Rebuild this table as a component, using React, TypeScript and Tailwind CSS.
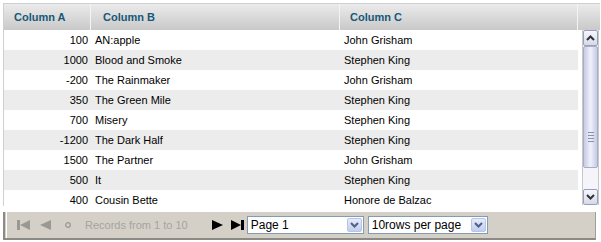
import React from "react";

const rows: [string, string, string][] = [
  ["100", "AN:apple", "John Grisham"],
  ["1000", "Blood and Smoke", "Stephen King"],
  ["-200", "The Rainmaker", "John Grisham"],
  ["350", "The Green Mile", "Stephen King"],
  ["700", "Misery", "Stephen King"],
  ["-1200", "The Dark Half", "Stephen King"],
  ["1500", "The Partner", "John Grisham"],
  ["500", "It", "Stephen King"],
  ["400", "Cousin Bette", "Honore de Balzac"],
];

function ChevronUp() {
  return (
    <svg width="9" height="6" viewBox="0 0 9 6">
      <path d="M1 5 L4.5 1.5 L8 5" stroke="#333" strokeWidth="2" fill="none" />
    </svg>
  );
}
function ChevronDown({ color = "#333" }: { color?: string }) {
  return (
    <svg width="9" height="6" viewBox="0 0 9 6">
      <path d="M1 1 L4.5 4.5 L8 1" stroke={color} strokeWidth="2" fill="none" />
    </svg>
  );
}

function Select({ label, width }: { label: string; width: number }) {
  return (
    <div
      className="flex h-[18px] items-center border border-[#7f9db9] bg-white"
      style={{ width }}
    >
      <span className="flex-1 whitespace-nowrap pl-[3px] text-[12px] leading-[16px] text-black">{label}</span>
      <div className="mr-[1px] flex h-[14px] w-[15px] shrink-0 items-center justify-center rounded-[2px] border border-[#b8c4e4] bg-gradient-to-b from-[#e6ebf8] to-[#c3cdee]">
        <ChevronDown color="#4d6185" />
      </div>
    </div>
  );
}

export default function App() {
  return (
    <div
      className="h-[242px] w-[601px] bg-white pl-[3px] pt-[3px]"
      style={{ fontFamily: '"Liberation Sans", Arial, sans-serif' }}
    >
      <div className="w-[597px] border-l border-t border-[#d0d0d0]">
        {/* header */}
        <div className="flex h-[26px] bg-gradient-to-b from-[#ebebeb] to-[#c9c9c9] text-[11px] font-bold text-[#17587a]">
          <div className="flex w-[87px] items-center border-r border-[#f4f4f4] pl-[10px]">Column A</div>
          <div className="flex w-[249px] items-center border-r border-[#f4f4f4] pl-[12px]">Column B</div>
          <div className="flex w-[238px] items-center border-r border-[#f4f4f4] pl-[10px]">Column C</div>
          <div className="flex-1" />
        </div>
        {/* body */}
        <div className="flex h-[176px] overflow-hidden">
          <div className="w-[574px] text-[11px] text-black">
            {rows.map((r, i) => (
              <div
                key={i}
                className={
                  "flex h-[20px] items-center " + (i % 2 === 1 ? "bg-[#ececec]" : "bg-white")
                }
              >
                <div className="w-[87px] pr-[3px] text-right">{r[0]}</div>
                <div className="w-[249px] pl-[4px]">{r[1]}</div>
                <div className="w-[238px] pl-[4px]">{r[2]}</div>
              </div>
            ))}
          </div>
          <div className="ml-[4px] flex h-[175px] w-[17px] flex-col border-l border-r border-[#c8c8c8] bg-[#f4f4fa]">
            <div className="flex h-[16px] items-center justify-center rounded-[2px] border border-[#98a0b8] bg-gradient-to-b from-[#f5f6ff] to-[#d6dae8]">
              <ChevronUp />
            </div>
            <div className="flex h-[122px] flex-col items-center justify-center rounded-[2px] border border-[#a8acc4] bg-gradient-to-r from-[#c8cbe2] via-[#eef0fb] to-[#c8cbe2]">
              <div className="mt-[60px] flex flex-col gap-[2px]">
                <div className="h-px w-[6px] bg-[#8a8fb0]" />
                <div className="h-px w-[6px] bg-[#8a8fb0]" />
                <div className="h-px w-[6px] bg-[#8a8fb0]" />
                <div className="h-px w-[6px] bg-[#8a8fb0]" />
              </div>
            </div>
            <div className="flex-1" />
            <div className="flex h-[16px] items-center justify-center rounded-[2px] border border-[#98a0b8] bg-gradient-to-b from-[#f5f6ff] to-[#d6dae8]">
              <ChevronDown />
            </div>
          </div>
        </div>
      </div>
      {/* pager */}
      <div className="mt-[6px] flex h-[28px] w-[593px] items-center border-b-2 border-l-2 border-r border-b-[#8c8a85] border-l-[#8c8a85] border-r-[#a09e98] bg-[#d4d0c8] text-[11px]">
        <div className="ml-[1px] h-full w-px bg-white" />
        <svg className="ml-[10px]" width="13" height="10" viewBox="0 0 13 10">
          <rect x="0" y="0" width="3" height="10" fill="#9a9892" />
          <path d="M13 0 L3 5 L13 10 Z" fill="#9a9892" />
        </svg>
        <svg className="ml-[10px]" width="11" height="10" viewBox="0 0 11 10">
          <path d="M11 0 L0 5 L11 10 Z" fill="#9a9892" />
        </svg>
        <svg className="ml-[14px]" width="6" height="6" viewBox="0 0 6 6">
          <circle cx="3" cy="3" r="2.3" stroke="#9a9892" strokeWidth="1.3" fill="none" />
        </svg>
        <span className="ml-[14px] whitespace-nowrap text-[11px] text-[#a6a49f]">Records from 1 to 10</span>
        <svg className="ml-[24px]" width="11" height="10" viewBox="0 0 11 10">
          <path d="M0 0 L11 5 L0 10 Z" fill="#000" />
        </svg>
        <svg className="ml-[8px]" width="13" height="10" viewBox="0 0 13 10">
          <path d="M0 0 L10 5 L0 10 Z" fill="#000" />
          <rect x="10" y="0" width="3" height="10" fill="#000" />
        </svg>
        <div className="ml-[3px]">
          <Select label="Page 1" width={117} />
        </div>
        <div className="ml-[4px]">
          <Select label="10rows per page" width={120} />
        </div>
      </div>
    </div>
  );
}
